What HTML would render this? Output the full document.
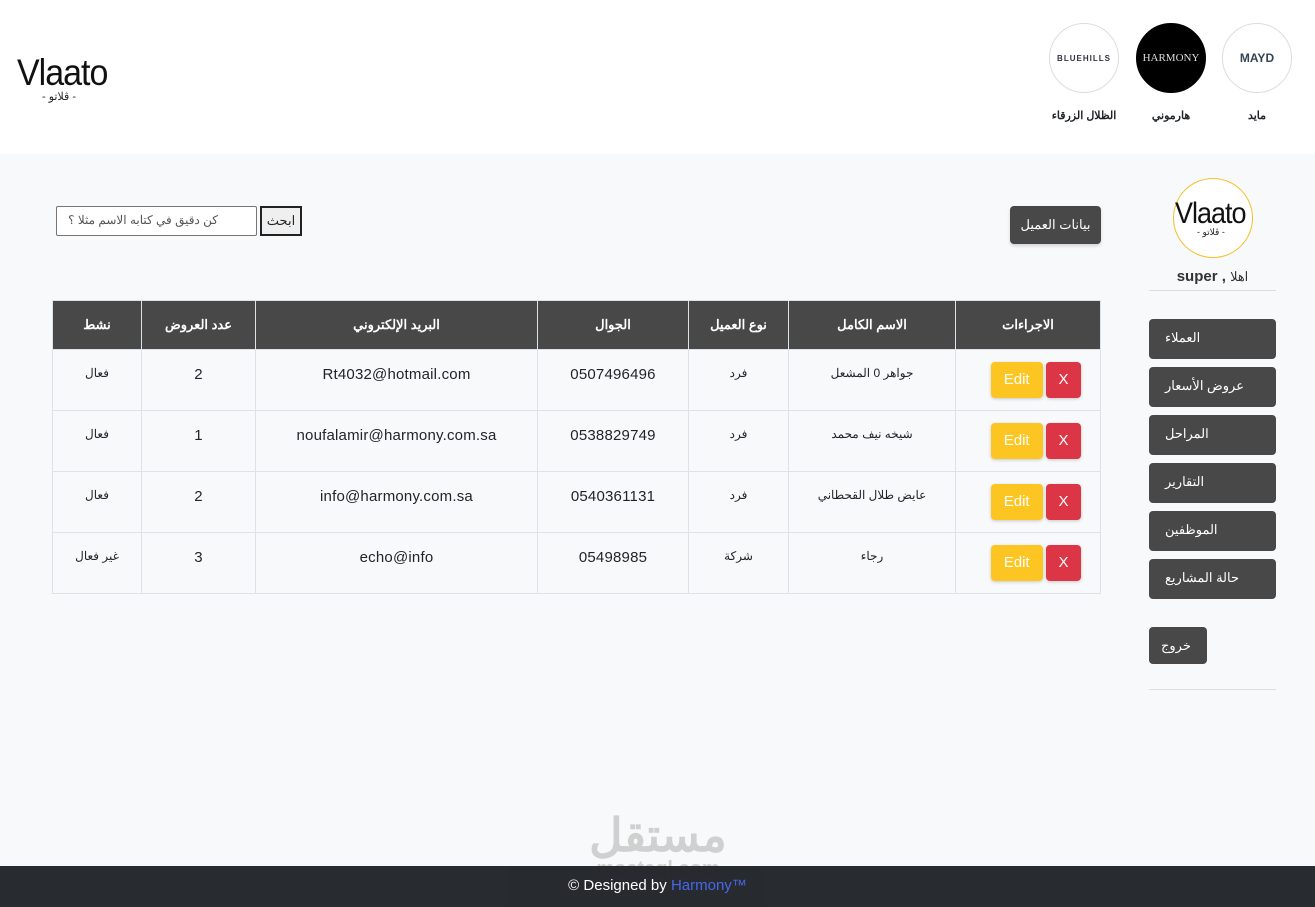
<!DOCTYPE html>
<html><head><meta charset="utf-8"><style>
*{box-sizing:border-box;margin:0;padding:0}
body{width:1315px;height:907px;background:#f8f9fa;font-family:"Liberation Sans","Noto Sans CJK SC",sans-serif;position:relative;overflow:hidden;color:#212529}
.abs{position:absolute}
header{position:absolute;left:0;top:0;width:1315px;height:154px;background:#fff}
.logo{font-family:"Liberation Sans",sans-serif;font-size:34px;letter-spacing:-1px;color:#111;transform:scaleY(1.1)}
.circ{position:absolute;width:70px;height:70px;border-radius:50%;border:1px solid #ddd;background:#fff;display:flex;align-items:center;justify-content:center;font-size:11px}
.lbl{position:absolute;font-size:11px;font-weight:bold;width:90px;text-align:center}
table{position:absolute;left:52px;top:300px;border-collapse:collapse;width:1049px;font-size:13px}
th{background:#484848;color:#fff;height:49px;font-weight:bold;border:1px solid #dee2e6;font-size:13px}
td{height:61px;border:1px solid #dee2e6;text-align:center;vertical-align:top;padding-top:16px;font-size:12px}
td.l{font-size:15px;letter-spacing:.2px}
td.a{padding-top:12px;text-align:right;padding-right:19px}
.btn{display:inline-block;color:#fff;border-radius:4px;height:36px;line-height:36px;font-size:15px;text-align:center;box-shadow:0 1px 3px rgba(0,0,0,.2)}
.side{position:absolute;left:1149px;width:127px;height:40px;background:#484848;color:#fff;border-radius:4px;font-size:13px;line-height:38px;padding-left:16px}
</style></head><body>
<header>
<div class="abs logo" style="left:17px;top:54px">Vlaato</div>
<div class="abs" style="left:42px;top:90px;font-size:11px">- ڤلاتو -</div>
<div class="circ" style="left:1049px;top:23px;font-size:8px;color:#334;font-weight:bold;letter-spacing:1px">BLUEHILLS</div>
<div class="circ" style="left:1136px;top:23px;background:#000;border-color:#000;color:#ddd;font-family:'Liberation Serif',serif;font-size:11px">HARMONY</div>
<div class="circ" style="left:1222px;top:23px;color:#345;font-weight:bold;font-size:12px">MAYD</div>
<div class="lbl" style="left:1039px;top:109px">الظلال الزرقاء</div>
<div class="lbl" style="left:1126px;top:109px">هارموني</div>
<div class="lbl" style="left:1212px;top:109px">مايد</div>
</header>
<div class="abs" style="left:56px;top:206px;width:201px;height:30px;border:1px solid #767676;background:#fff;border-radius:2px;font-size:12px;color:#555;text-align:right;padding:6px 38px 0 0">كن دقيق في كتابه الاسم مثلا ؟</div>
<div class="abs" style="left:260px;top:206px;width:42px;height:30px;border:2px solid #222;background:#efefef;font-size:13px;text-align:center;line-height:26px">ابحث</div>
<div class="abs" style="left:1010px;top:206px;width:91px;height:38px;background:#484848;color:#fff;border-radius:4px;font-size:13px;text-align:center;line-height:38px;box-shadow:0 2px 3px rgba(0,0,0,.15)">بيانات العميل</div>
<table>
<tr><th style="width:89px">نشط</th><th style="width:114px">عدد العروض</th><th style="width:282px">البريد الإلكتروني</th><th style="width:151px">الجوال</th><th style="width:100px">نوع العميل</th><th style="width:167px">الاسم الكامل</th><th>الاجراءات</th></tr>
<tr><td>فعال</td><td class="l">2</td><td class="l">Rt4032@hotmail.com</td><td class="l">0507496496</td><td>فرد</td><td>جواهر 0 المشعل</td><td class="a"><span class="btn" style="background:#fcc522;width:52px">Edit</span> <span class="btn" style="background:#dc3545;width:35px">X</span></td></tr>
<tr><td>فعال</td><td class="l">1</td><td class="l">noufalamir@harmony.com.sa</td><td class="l">0538829749</td><td>فرد</td><td>شيخه نيف محمد</td><td class="a"><span class="btn" style="background:#fcc522;width:52px">Edit</span> <span class="btn" style="background:#dc3545;width:35px">X</span></td></tr>
<tr><td>فعال</td><td class="l">2</td><td class="l">info@harmony.com.sa</td><td class="l">0540361131</td><td>فرد</td><td>عايض طلال القحطاني</td><td class="a"><span class="btn" style="background:#fcc522;width:52px">Edit</span> <span class="btn" style="background:#dc3545;width:35px">X</span></td></tr>
<tr><td>غير فعال</td><td class="l">3</td><td class="l">echo@info</td><td class="l">05498985</td><td>شركة</td><td>رجاء</td><td class="a"><span class="btn" style="background:#fcc522;width:52px">Edit</span> <span class="btn" style="background:#dc3545;width:35px">X</span></td></tr>
</table>
<div class="abs" style="left:1173px;top:178px;width:80px;height:80px;border-radius:50%;border:1px solid #f5c028;background:#fff"></div>
<div class="abs logo" style="left:1175px;top:198px;font-size:27px">Vlaato</div>
<div class="abs" style="left:1197px;top:227px;font-size:9px">- ڤلاتو -</div>
<div class="abs" style="left:1149px;top:268px;width:127px;text-align:center;font-size:15px;font-weight:bold;color:#333">super , <span style="font-weight:normal;font-size:13px">اهلا</span></div>
<div class="abs" style="left:1149px;top:290px;width:127px;border-top:1px solid #ddd"></div>
<div class="side" style="top:319px">العملاء</div>
<div class="side" style="top:367px">عروض الأسعار</div>
<div class="side" style="top:415px">المراحل</div>
<div class="side" style="top:463px">التقارير</div>
<div class="side" style="top:511px">الموظفين</div>
<div class="side" style="top:559px">حالة المشاريع</div>
<div class="side" style="top:627px;width:58px;height:37px;padding-left:12px;line-height:37px">خروج</div>
<div class="abs" style="left:1149px;top:689px;width:127px;border-top:1px solid #ddd"></div>
<div class="abs" style="left:578px;top:810px;width:160px;text-align:center;color:#d0d0d0;font-size:46px;font-weight:bold;line-height:50px">مستقل</div>
<div class="abs" style="left:578px;top:858px;width:160px;text-align:center;color:#d0d0d0;font-size:20px;font-weight:bold">mostaql.com</div>
<div class="abs" style="left:0;top:866px;width:1315px;height:41px;background:#212529;opacity:.97;color:#fff;text-align:center;font-size:15px;line-height:40px">© Designed by <span style="color:#4263eb">Harmony™</span></div>
</body></html>
